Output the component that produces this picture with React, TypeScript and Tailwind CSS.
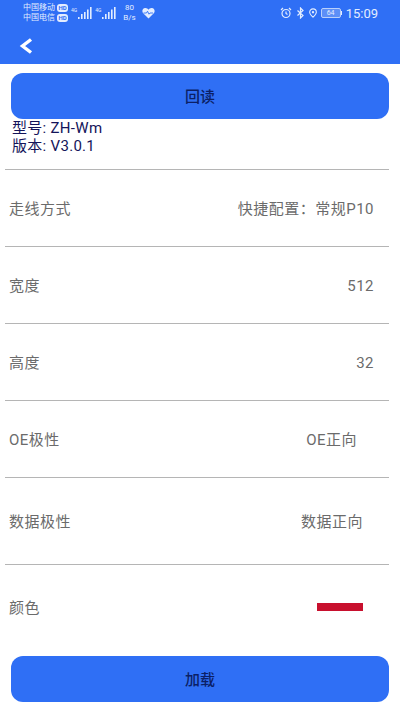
import React from 'react'

const font = { fontFamily: 'Roboto, "Noto Sans CJK SC", sans-serif' }

function Bars() {
  return (
    <svg width="14" height="12" viewBox="0 0 14 12" fill="#e3edff">
      <rect x="0" y="10" width="1.6" height="2" />
      <rect x="3" y="7" width="1.6" height="5" />
      <rect x="6" y="5" width="1.6" height="7" />
      <rect x="9" y="2.500" width="1.6" height="9.500" />
      <rect x="12" y="0" width="1.6" height="12" />
    </svg>
  )
}

function HdBadge() {
  return (
    <span className="ml-[2px] inline-flex h-[8px] w-[11px] items-center justify-center rounded-[3px] bg-[#e3edff] text-[6px] leading-none font-bold text-[#2f6ff5]">
      HD
    </span>
  )
}

function StatusBar() {
  return (
    <div className="flex h-[26px] items-center justify-between pr-[22px] pl-[23px] text-[#e3edff]">
      <div className="flex items-center">
        <div className="flex flex-col text-[8px] leading-[10px]">
          <div className="flex items-center">中国移动<HdBadge /></div>
          <div className="flex items-center">中国电信<HdBadge /></div>
        </div>
        <div className="ml-[3px] flex items-end">
          <span className="mr-[1px] self-start text-[5px] leading-[6px]">4G</span>
          <Bars />
        </div>
        <div className="ml-[3px] flex items-end">
          <span className="mr-[1px] self-start text-[5px] leading-[6px]">4G</span>
          <Bars />
        </div>
        <div className="ml-[6px] flex w-[14px] flex-col items-center text-[8px] leading-[10px]">
          <span>80</span>
          <span>B/s</span>
        </div>
        <svg className="ml-[6px]" width="13" height="12" viewBox="0 0 13 12">
          <path d="M6.5 11.5 1.2 6.2C-.4 4.5.3 1.2 3.2 1c1.5-.1 2.6.7 3.3 1.7C7.200 1.700 8.300.9 9.800 1c2.900.2 3.600 3.500 2 5.200z" fill="#e3edff" />
          <path d="M1.500 6h3l1-1.800 1.500 3 1-1.200h3" fill="none" stroke="#2f6ff5" strokeWidth="0.9" />
        </svg>
      </div>
      <div className="flex items-center">
        <svg width="12" height="12" viewBox="0 0 24 24" fill="none" stroke="#e3edff" strokeWidth="2.400">
          <circle cx="12" cy="13" r="8" />
          <path d="M12 9v4l3 2M2 6l4-4M22 6l-4-4" />
        </svg>
        <svg className="ml-[4px]" width="9" height="12" viewBox="0 0 18 24" fill="none" stroke="#e3edff" strokeWidth="2.400">
          <path d="m3 7 11 10-5 5V2l5 5L3 17" />
        </svg>
        <svg className="ml-[3px]" width="10" height="12" viewBox="0 0 24 24" fill="none" stroke="#e3edff" strokeWidth="2.600">
          <path d="M12 22C7 17 4 13.500 4 10a8 8 0 0 1 16 0c0 3.500-3 7-8 12z" />
          <circle cx="12" cy="10" r="1.500" />
        </svg>
        <div className="ml-[3px] flex items-center">
          <div className="flex h-[10px] w-[20px] items-center justify-center rounded-[2px] border border-[#b9d0fb] bg-[#5d8ff7] text-[7px] leading-none">
            64
          </div>
          <div className="h-[4px] w-[1px] bg-[#e3edff]" />
        </div>
        <span className="ml-[4px] text-[13px] leading-none">15:09</span>
      </div>
    </div>
  )
}

function Row({ label, height, children }: { label: string; height: string; children: React.ReactNode }) {
  return (
    <div className={`mr-[11px] ml-[5px] flex items-center justify-between border-b border-[#b5b5b5] pt-[2px] pl-[4px] text-[15px] tracking-[0.5px] text-[#6b6b6b] ${height}`}>
      <span>{label}</span>
      {children}
    </div>
  )
}

export default function App() {
  return (
    <div className="flex h-[711px] w-[400px] flex-col bg-white" style={font}>
      <div className="h-[64px] shrink-0 bg-[#2f6ff5]">
        <StatusBar />
        <div className="flex h-[38px] items-start pt-[12px] pl-[19px]">
          <svg width="14" height="16" viewBox="0 0 14 16" fill="none" stroke="#fff" strokeWidth="3.400">
            <path d="M12 1.500 3.500 8l8.500 6.500" />
          </svg>
        </div>
      </div>

      <div className="px-[11px] pt-[9px]">
        <button className="flex h-[46px] w-full items-center justify-center rounded-[12px] bg-[#2f6ff5] pt-[2px] text-[15px] font-medium text-[#0b1f66]">
          回读
        </button>
      </div>

      <div className="mr-[11px] ml-[5px] h-[51px] border-b border-[#b5b5b5] pl-[7px] text-[15px] leading-[18px] tracking-[0.3px] text-[#14145a]">
        <div>型号: ZH-Wm</div>
        <div>版本: V3.0.1</div>
      </div>

      <Row label="走线方式" height="h-[77px]">
        <span className="pr-[15px]">快捷配置：常规P10</span>
      </Row>
      <Row label="宽度" height="h-[77px]">
        <span className="pr-[15px]">512</span>
      </Row>
      <Row label="高度" height="h-[77px]">
        <span className="pr-[15px]">32</span>
      </Row>
      <Row label="OE极性" height="h-[77px]">
        <span className="pr-[32px]">OE正向</span>
      </Row>
      <Row label="数据极性" height="h-[87px]">
        <span className="pr-[26px]">数据正向</span>
      </Row>

      <div className="mr-[11px] ml-[5px] flex h-[85px] items-center justify-between pt-[2px] pl-[4px] text-[15px] tracking-[0.5px] text-[#6b6b6b]">
        <span>颜色</span>
        <div className="mr-[26px] mb-[4px] h-[8px] w-[46px] bg-[#c8102e]" />
      </div>

      <div className="px-[11px] pt-[6px]">
        <button className="flex h-[46px] w-full items-center justify-center rounded-[12px] bg-[#2f6ff5] pt-[2px] text-[15px] font-medium text-[#0b1f66]">
          加载
        </button>
      </div>
    </div>
  )
}
